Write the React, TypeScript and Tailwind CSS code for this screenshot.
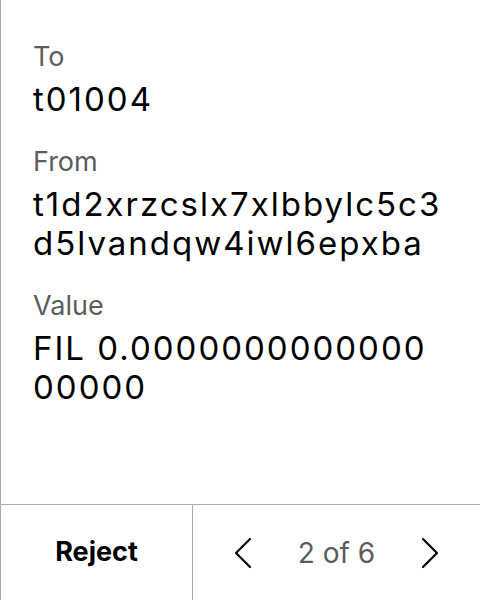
function Field({ label, value }: { label: string; value: string }) {
  return (
    <div className="mb-[27px]">
      <div className="text-[27px] leading-[32px] text-[#5c5c5c]">{label}</div>
      <div className="mt-[7px] text-[33px] leading-[39px] tracking-[2px] text-black break-all">
        {value}
      </div>
    </div>
  );
}

function Chevron({ dir }: { dir: "left" | "right" }) {
  return (
    <svg width="18" height="32" viewBox="0 0 18 32" fill="none">
      <polyline
        points={dir === "left" ? "16,2 2,16 16,30" : "2,2 16,16 2,30"}
        stroke="black"
        strokeWidth="2.2"
        strokeLinecap="round"
        strokeLinejoin="round"
      />
    </svg>
  );
}

export default function App() {
  return (
    <div
      className="flex h-[600px] w-[480px] flex-col border-l border-[#ababab] bg-white"
      style={{ fontFamily: "Inter, 'Noto Sans', sans-serif" }}
    >
      <div className="flex-1 pl-[32px] pr-[33px] pt-[41px]">
        <Field label="To" value="t01004" />
        <Field label="From" value="t1d2xrzcslx7xlbbylc5c3d5lvandqw4iwl6epxba" />
        <Field label="Value" value="FIL 0.000000000000000000" />
      </div>
      <div className="flex h-[96px] border-t border-[#ababab]">
        <button className="w-[192px] border-r border-[#ababab] text-[27px] font-bold text-black">
          Reject
        </button>
        <div className="flex flex-1 items-center justify-between px-[41px]">
          <Chevron dir="left" />
          <span className="text-[28px] text-[#5c5c5c]">2 of 6</span>
          <Chevron dir="right" />
        </div>
      </div>
    </div>
  );
}
